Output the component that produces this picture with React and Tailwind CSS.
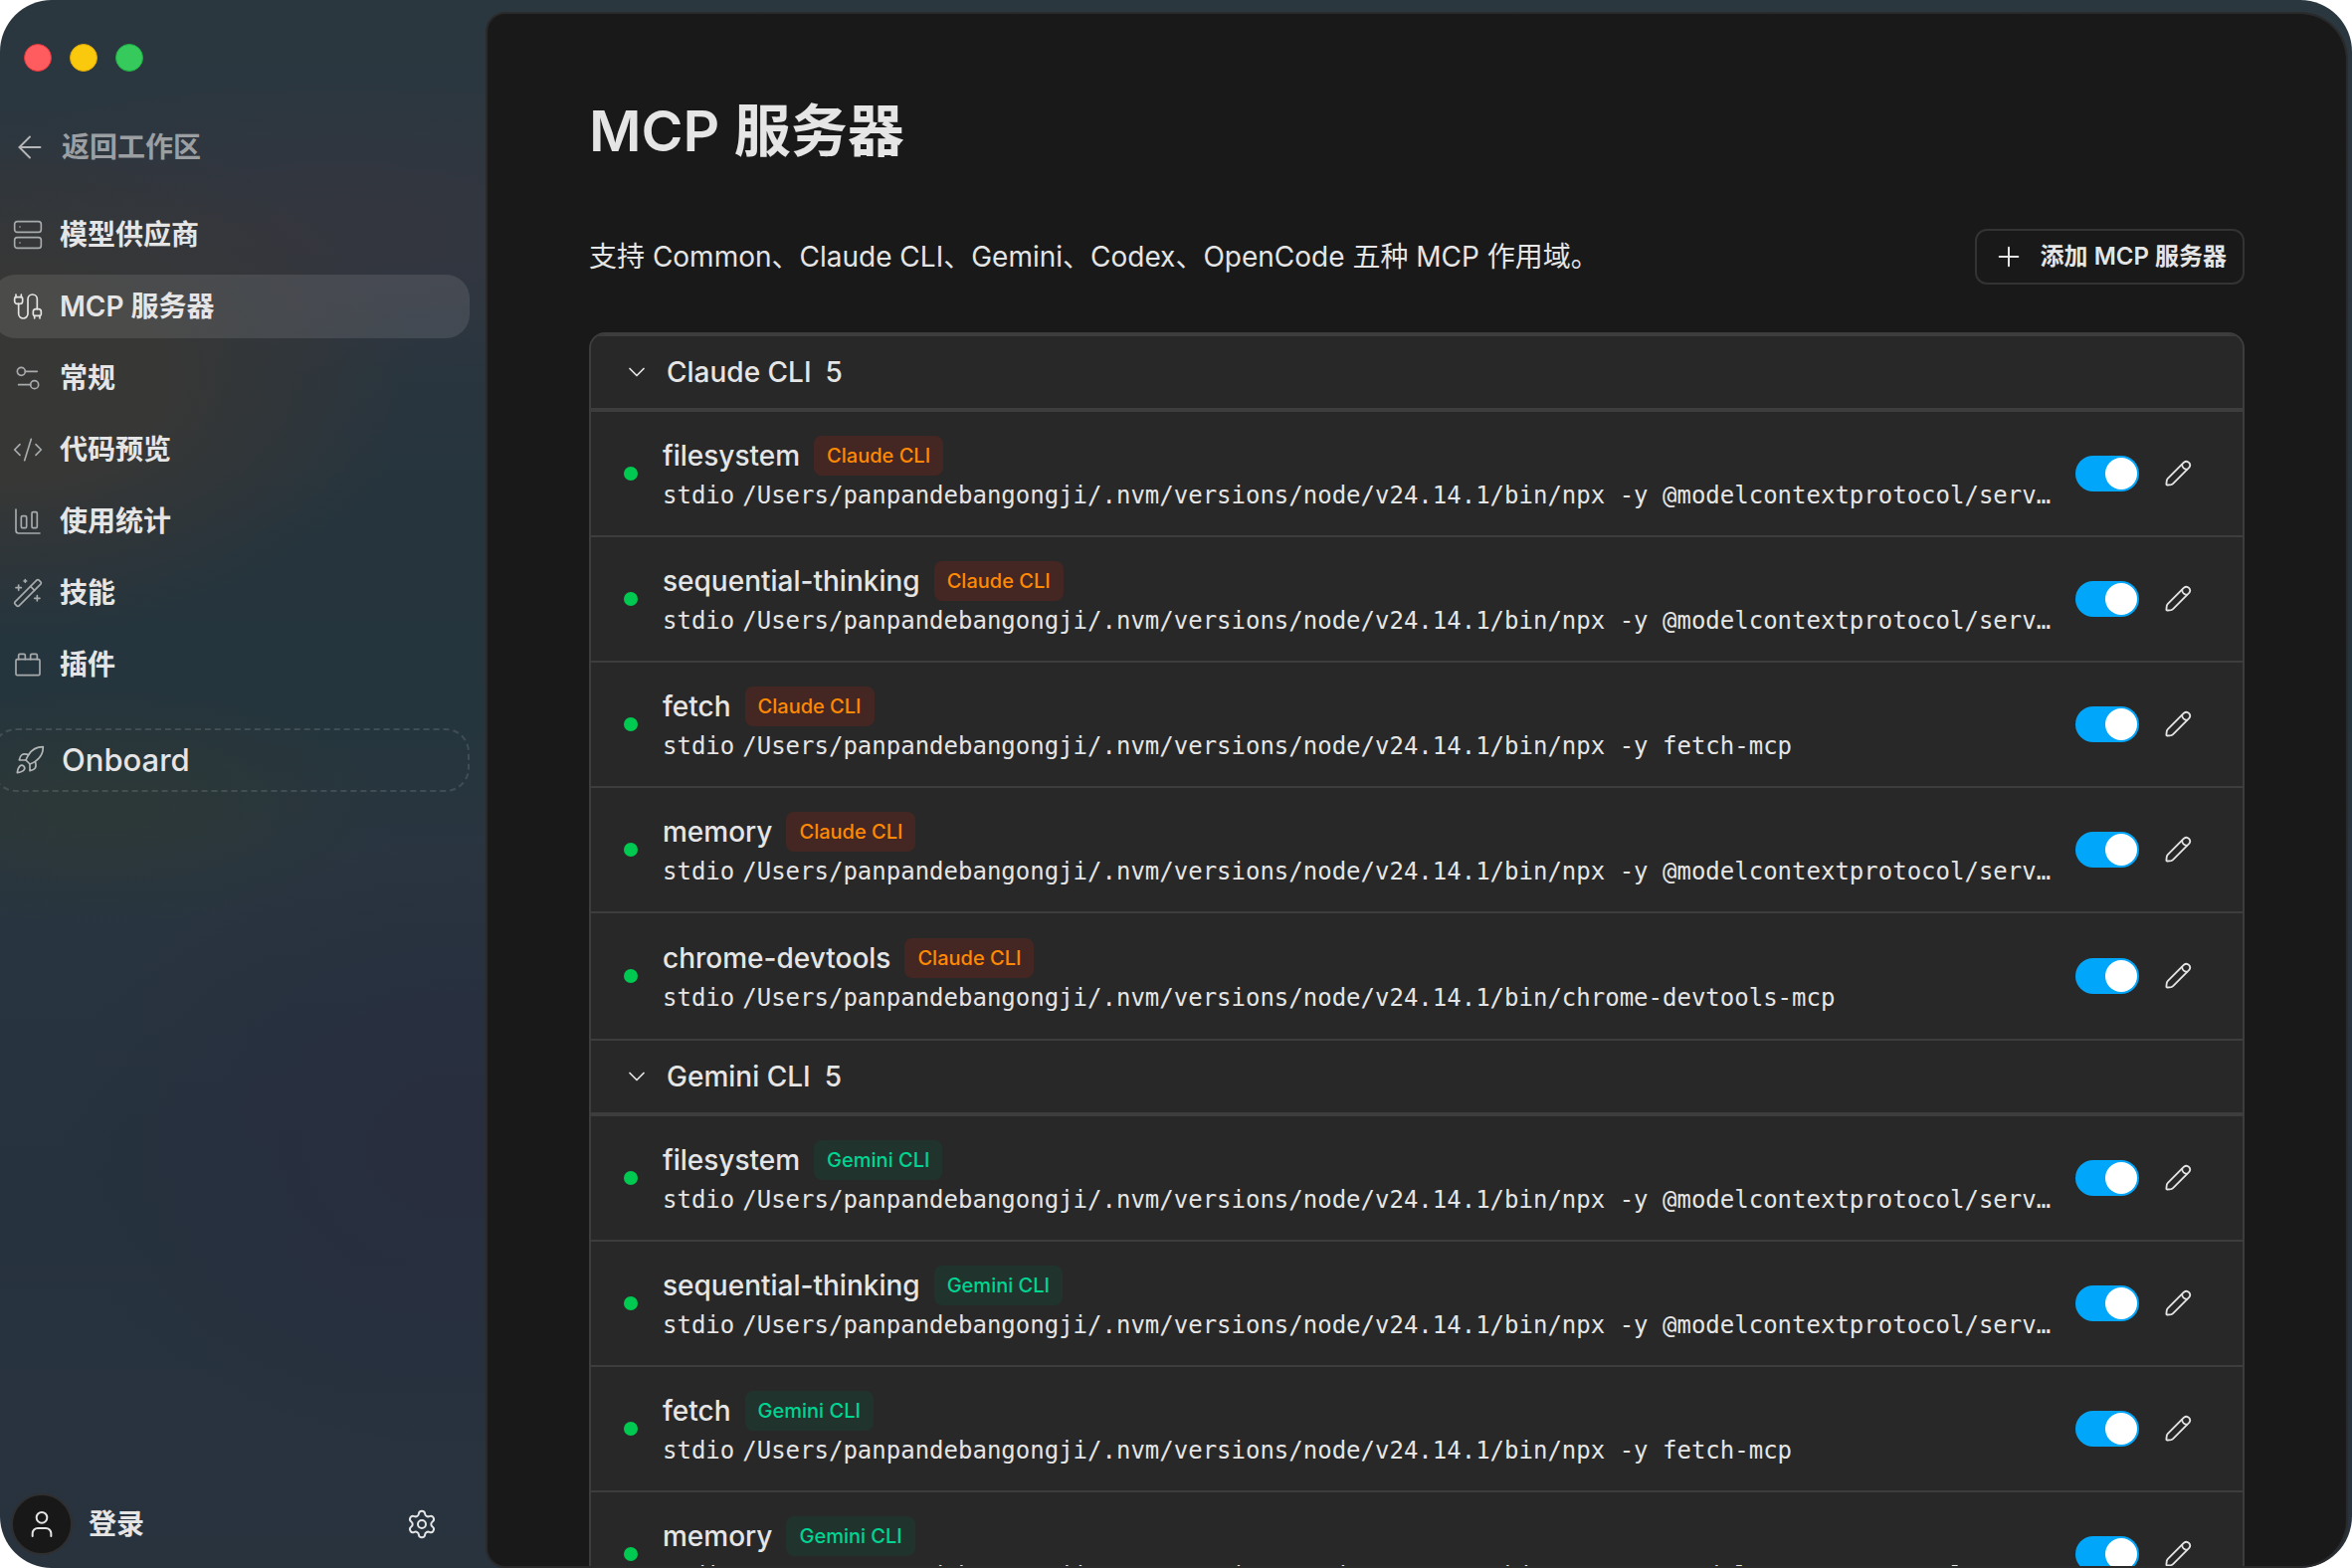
import { useState } from "react";
import {
  ArrowLeft,
  Cable,
  ChartColumnBig,
  ChevronDown,
  CodeXml,
  Plus,
  Rocket,
  Server,
  Settings,
  Settings2,
  ToyBrick,
  User,
  WandSparkles,
} from "lucide-react";

const NPX = "/Users/panpandebangongji/.nvm/versions/node/v24.14.1/bin";

const navItems = [
  { id: "providers", label: "模型供应商", icon: Server },
  { id: "mcp", label: "MCP 服务器", icon: Cable },
  { id: "general", label: "常规", icon: Settings2 },
  { id: "preview", label: "代码预览", icon: CodeXml },
  { id: "usage", label: "使用统计", icon: ChartColumnBig },
  { id: "skills", label: "技能", icon: WandSparkles },
  { id: "plugins", label: "插件", icon: ToyBrick },
];

const servers = [
  { name: "filesystem", command: `${NPX}/npx -y @modelcontextprotocol/server-filesystem` },
  { name: "sequential-thinking", command: `${NPX}/npx -y @modelcontextprotocol/server-sequential-thinking` },
  { name: "fetch", command: `${NPX}/npx -y fetch-mcp` },
  { name: "memory", command: `${NPX}/npx -y @modelcontextprotocol/server-memory` },
  { name: "chrome-devtools", command: `${NPX}/chrome-devtools-mcp` },
];

const groups = [
  { title: "Claude CLI", badge: "bg-[#442723] text-[#ff8904]" },
  { title: "Gemini CLI", badge: "bg-[#21332d] text-[#00d492]" },
];

function PencilIcon() {
  return (
    <svg className="size-7" viewBox="0 0 28 28" fill="none" stroke="currentColor" strokeWidth="1.8" strokeLinecap="round" strokeLinejoin="round">
      <path d="M19.1 2.7 2.9 18.9Q2 19.8 1.8 21l-.4 3.4q0 1.3 1.2 1.1l3.6-.4q1.1-.2 1.9-1L24.3 7.9A3.7 3.7 0 0 0 19.1 2.7Z" />
      <path d="M17.2 4.8c0 2.8 2.2 5 5 5" />
    </svg>
  );
}

function Sidebar({ active, onSelect }) {
  return (
    <aside className="flex w-[488px] shrink-0 flex-col">
      {/* Window controls */}
      <div className="flex gap-[18px] pt-11 pl-6">
        <span className="size-7 rounded-full border border-[#e0353c] bg-[#ff5c60]"></span>
        <span className="size-7 rounded-full border border-[#dba50a] bg-[#fac80d]"></span>
        <span className="size-7 rounded-full border border-[#1fae43] bg-[#36c95c]"></span>
      </div>

      <a href="#workspace" className="mt-11 flex h-16 items-center gap-[14px] pl-3 text-[28px] font-semibold text-[#9c9fa1]">
        <ArrowLeft size={36} strokeWidth={1.25} className="text-[#b4b6b7]" />
        返回工作区
      </a>

      {/* Settings pages */}
      <nav className="mt-6 flex flex-col gap-2 pr-4">
        {navItems.map(({ id, label, icon: Icon }) => (
          <button
            key={id}
            type="button"
            onClick={() => onSelect(id)}
            className={`-ml-2 flex h-16 items-center gap-4 rounded-3xl pl-5 text-[28px] font-semibold ${
              id === active ? "bg-white/10" : ""
            }`}
          >
            <Icon size={32} strokeWidth={1.25} className={id === active ? "text-[#e5e5e5]" : "text-[#a8abac]"} />
            {label}
          </button>
        ))}
      </nav>

      <div className="mt-8 pr-4">
        <button
          type="button"
          className="-ml-2 flex h-16 w-[480px] items-center gap-4 rounded-3xl border-2 border-dashed border-white/12 pl-5 text-[31px] font-medium"
        >
          <Rocket size={32} strokeWidth={1.25} className="text-[#b4b6b7]" />
          Onboard
        </button>
      </div>

      {/* Account */}
      <div className="mt-auto flex items-center justify-between pr-12 pb-[13px] pl-[11px]">
        <button type="button" className="flex items-center gap-4 text-[28px] font-semibold">
          <span className="flex size-[62px] items-center justify-center rounded-full border-2 border-[#302f2f] bg-[#181818]">
            <User size={32} strokeWidth={1.5} />
          </span>
          登录
        </button>
        <button type="button" aria-label="设置">
          <Settings size={32} strokeWidth={1.5} />
        </button>
      </div>
    </aside>
  );
}

function Toggle({ label }) {
  const [checked, setChecked] = useState(true);

  return (
    <label className="relative flex h-9 w-16 shrink-0 rounded-full bg-[#52525b] p-0.5 has-checked:justify-end has-checked:bg-[#00a6f9]">
      <input
        type="checkbox"
        role="switch"
        aria-label={label}
        checked={checked}
        onChange={(e) => setChecked(e.target.checked)}
        className="sr-only"
      />
      <span className="size-8 rounded-full bg-white"></span>
    </label>
  );
}

function ServerRow({ server, group }) {
  return (
    <li className="flex h-[126px] items-center border-b-2 border-[#3d3d3d] pr-12 pl-[33px] last:border-b-0">
      <span className="size-[14px] shrink-0 rounded-full bg-[#00c951]"></span>
      <div className="ml-[25px] min-w-0 flex-1 pt-1">
        <div className="flex items-center gap-[14px]">
          <span className="text-[28px] leading-10 font-medium">{server.name}</span>
          <span className={`rounded-lg px-[13px] text-xl leading-10 font-medium ${group.badge}`}>{group.title}</span>
        </div>
        <div className="flex gap-2 font-['DejaVu_Sans_Mono',monospace] text-2xl leading-10">
          <span>stdio</span>
          <span className="truncate">{server.command}</span>
        </div>
      </div>
      <div className="ml-6 flex items-center gap-6">
        <Toggle label={server.name} />
        <button type="button" aria-label="编辑" className="flex size-8 items-center justify-center">
          <PencilIcon />
        </button>
      </div>
    </li>
  );
}

function ServerGroup({ group }) {
  const [open, setOpen] = useState(true);

  return (
    <section className="border-t-2 border-[#3d3d3d]">
      <button
        type="button"
        onClick={() => setOpen(!open)}
        className="flex h-[76px] w-full items-center border-b-4 border-[#3d3d3d] pl-8 text-[28px] font-medium"
      >
        <ChevronDown size={28} strokeWidth={1.5} />
        <span className="ml-4">{group.title}</span>
        <span className="ml-[14px]">{servers.length}</span>
      </button>
      {open && (
        <ul>
          {servers.map((server) => (
            <ServerRow key={server.name} server={server} group={group} />
          ))}
        </ul>
      )}
    </section>
  );
}

function App() {
  const [active, setActive] = useState("mcp");

  return (
    <div className="h-screen overflow-hidden bg-white font-['Inter','Noto_Sans_CJK_SC',sans-serif] text-[#e5e5e5]">
      <div className="flex h-full overflow-hidden rounded-[52px] bg-[radial-gradient(ellipse_420px_260px_at_0px_380px,#373736_40%,transparent),radial-gradient(ellipse_460px_150px_at_340px_230px,#34363f_10%,transparent),radial-gradient(ellipse_300px_120px_at_100px_810px,#2c3837_10%,transparent),radial-gradient(ellipse_400px_320px_at_460px_1150px,#282e3e_15%,transparent),linear-gradient(#2a373f_0%,#2c3640_15%,#25343d_34%,#25353d_46%,#293540_54%,#26323e_75%,#28333e_100%)]">
        <Sidebar active={active} onSelect={setActive} />

        <main className="mt-3 mr-1 min-w-0 flex-1 overflow-y-auto rounded-[20px] rounded-r-[48px] border-2 border-[#2b2a2a] bg-[#191919] px-[102px] pt-20 [scrollbar-width:none]">
          <h1 className="text-[57px] leading-[76px] font-semibold">MCP 服务器</h1>

          <div className="mt-[60px] flex items-center justify-between">
            <p className="text-[28px]">支持 Common、Claude CLI、Gemini、Codex、OpenCode 五种 MCP 作用域。</p>
            <button
              type="button"
              className="flex h-14 items-center gap-4 rounded-xl border-2 border-[#333] px-4 text-2xl font-semibold"
            >
              <Plus size={32} strokeWidth={1.5} />
              添加 MCP 服务器
            </button>
          </div>

          {/* Server list */}
          <div className="mt-12 overflow-hidden rounded-2xl border-2 border-[#3d3d3d] bg-[#282828]">
            {groups.map((group) => (
              <ServerGroup key={group.title} group={group} />
            ))}
          </div>
        </main>
      </div>
    </div>
  );
}

export default App;
